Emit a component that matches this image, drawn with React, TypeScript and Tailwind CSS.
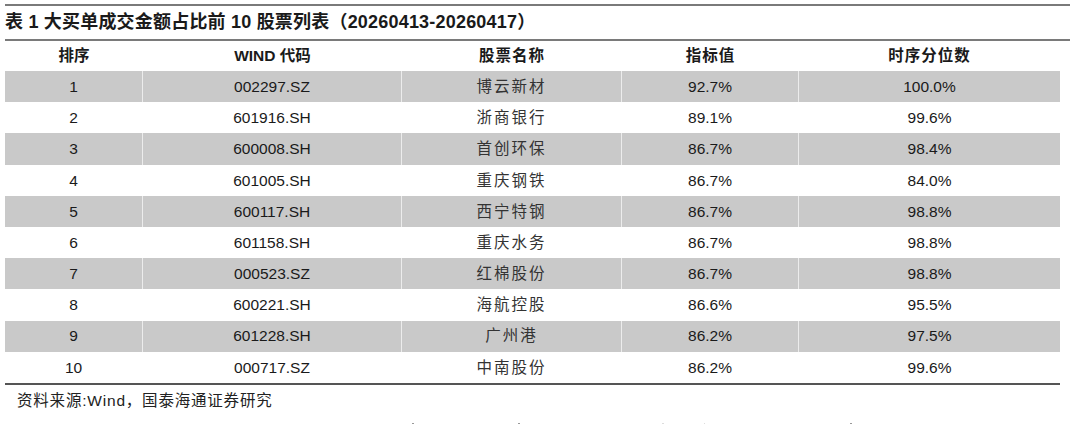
const FONT = { fontFamily: '"Liberation Sans", "Noto Sans CJK SC", sans-serif' }

interface Row {
  rank: number
  code: string
  name: string
  value: string
  pct: string
}

const ROWS: Row[] = [
  { rank: 1, code: '002297.SZ', name: '博云新材', value: '92.7%', pct: '100.0%' },
  { rank: 2, code: '601916.SH', name: '浙商银行', value: '89.1%', pct: '99.6%' },
  { rank: 3, code: '600008.SH', name: '首创环保', value: '86.7%', pct: '98.4%' },
  { rank: 4, code: '601005.SH', name: '重庆钢铁', value: '86.7%', pct: '84.0%' },
  { rank: 5, code: '600117.SH', name: '西宁特钢', value: '86.7%', pct: '98.8%' },
  { rank: 6, code: '601158.SH', name: '重庆水务', value: '86.7%', pct: '98.8%' },
  { rank: 7, code: '000523.SZ', name: '红棉股份', value: '86.7%', pct: '98.8%' },
  { rank: 8, code: '600221.SH', name: '海航控股', value: '86.6%', pct: '95.5%' },
  { rank: 9, code: '601228.SH', name: '广州港', value: '86.2%', pct: '97.5%' },
  { rank: 10, code: '000717.SZ', name: '中南股份', value: '86.2%', pct: '99.6%' },
]

const COLS = ['w-[138px]', 'w-[259px]', 'w-[220px]', 'w-[177px]', 'w-[261px]']

export default function App() {
  return (
    <div className="w-[1075px] h-[425px] bg-white text-[#1a1a1a]" style={FONT}>
      <div className="pt-[4px]">
        <div className="ml-[5px] w-[1065px] h-[2px] bg-[#7a7a7a]" />
      </div>

      <div className="h-[33px] flex items-center pl-[5px] text-[18px] font-bold tracking-[0.2px]">
        表 1 大买单成交金额占比前 10 股票列表（20260413-20260417）
      </div>

      <div className="ml-[5px] w-[1065px] h-[2px] bg-[#7a7a7a]" />

      <div className="ml-[5px] w-[1055px]">
        {/* 表头 */}
        <div className="flex h-[30px] items-center text-[15.5px] font-bold">
          <div className={`${COLS[0]} text-center`}>排序</div>
          <div className={`${COLS[1]} text-center`}>WIND 代码</div>
          <div className={`${COLS[2]} text-center tracking-[1px]`}>股票名称</div>
          <div className={`${COLS[3]} text-center tracking-[1px]`}>指标值</div>
          <div className={`${COLS[4]} text-center tracking-[1px]`}>时序分位数</div>
        </div>

        {ROWS.map((r, i) => {
          const gray = i % 2 === 0
          const sep = gray ? 'border-r border-[#ececec]' : 'border-r border-white'
          return (
            <div
              key={r.rank}
              className={'flex h-[31.2px] items-center text-[15.5px] ' + (gray ? 'bg-[#c9c9c9]' : 'bg-white')}
            >
              <div className={`${COLS[0]} h-full flex items-center justify-center ${sep}`}>{r.rank}</div>
              <div className={`${COLS[1]} h-full flex items-center justify-center ${sep}`}>{r.code}</div>
              <div className={`${COLS[2]} h-full flex items-center justify-center tracking-[2px] text-[#333] ${sep}`}>
                {r.name}
              </div>
              <div className={`${COLS[3]} h-full flex items-center justify-center ${sep}`}>{r.value}</div>
              <div className={`${COLS[4]} h-full flex items-center justify-center`}>{r.pct}</div>
            </div>
          )
        })}

        <div className="h-[2px] bg-[#555555]" />
      </div>

      <div className="pl-[17px] pt-[6px] text-[15.5px] leading-[20px] text-[#222] tracking-[0.8px]">
        资料来源:Wind，国泰海通证券研究
      </div>

      <div className="flex items-center h-[1px] mt-[12px]">
        <span className="ml-[412px] w-[2px] h-[1px] bg-[#999]" />
        <span className="ml-[104px] w-[2px] h-[1px] bg-[#999]" />
        <span className="ml-[142px] w-[2px] h-[1px] bg-[#ddd]" />
        <span className="ml-[40px] w-[1px] h-[1px] bg-[#ddd]" />
        <span className="ml-[145px] w-[2px] h-[1px] bg-[#999]" />
      </div>
    </div>
  )
}
